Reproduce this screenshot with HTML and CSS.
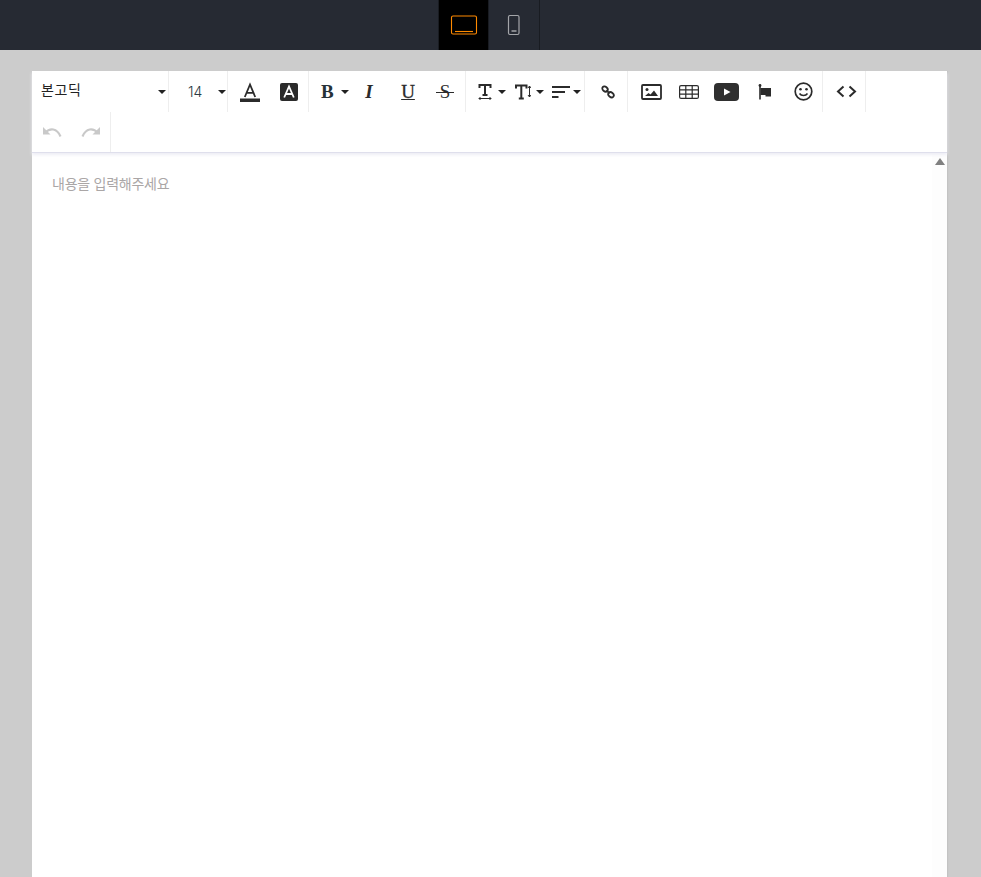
FILE: index.html
```html
<!DOCTYPE html>
<html lang="ko">
<head>
<meta charset="utf-8">
<title>Editor</title>
<link rel="stylesheet" href="styles.css">
</head>
<body>
<header class="topbar">
  <div class="devices">
    <button class="device active" aria-label="desktop">
      <svg width="28" height="20" viewBox="0 0 28 20"><rect x="1.500" y="1" width="25" height="18" rx="1.500" fill="none" stroke="#ff8a00" stroke-width="1.100"/><path d="M5 16.500h18" stroke="#ff8a00" stroke-width="1.100"/></svg>
    </button>
    <button class="device second" aria-label="mobile">
      <svg width="14" height="22" viewBox="0 0 14 22"><rect x="1.500" y="1.500" width="10.500" height="19" rx="1.500" fill="none" stroke="#a3a5a9" stroke-width="1.200"/><path d="M4.500 17h5" stroke="#a3a5a9" stroke-width="1.500"/></svg>
    </button>
  </div>
</header>
<main class="stage">
  <section class="editor">
    <div class="toolbar">
      <div class="group font-group">
        <span class="font-name">본고딕</span><i class="caret"></i>
      </div>
      <div class="group size-group">
        <span class="font-size">14</span><i class="caret"></i>
      </div>
      <div class="group color-group">
        <button class="tool w-c1"><svg width="20" height="20" viewBox="0 0 20 20"><path d="M4.800 15 10 2.500 15.200 15M6.500 10.800h7" fill="none" stroke="#2b2b2b" stroke-width="1.800"/><rect y="16.500" width="20" height="3.500" fill="#2b2b2b"/></svg></button>
        <button class="tool w-c2"><svg width="18" height="18" viewBox="0 0 18 18"><rect width="18" height="18" rx="2" fill="#2b2b2b"/><path d="M4.200 14.500 9 3.500l4.800 11M5.800 11h6.400" fill="none" stroke="#fff" stroke-width="1.800"/></svg></button>
      </div>
      <div class="group style-group">
        <button class="tool serif bold w-b">B<i class="caret"></i></button>
        <button class="tool serif italic w-i">I</button>
        <button class="tool serif under w-u">U</button>
        <button class="tool serif strike w-s"><span class="strike-s">S</span></button>
      </div>
      <div class="group para-group">
        <button class="tool w-t"><svg width="14" height="18" viewBox="0 0 14 18"><path d="M1.500 5V2h11v3M7 2v10M4.500 12h5" fill="none" stroke="#2b2b2b" stroke-width="2"/><path d="M1 15.500h12M2.500 14 1 15.500 2.500 17M11.500 14l1.500 1.500-1.500 1.500" fill="none" stroke="#2b2b2b" stroke-width="1"/></svg><i class="caret"></i></button>
        <button class="tool w-t2"><svg width="16" height="16" viewBox="0 0 16 16"><path d="M1 4.500V1.500h10.500v3M6.300 1.500v13M3.800 14.500h5" fill="none" stroke="#2b2b2b" stroke-width="2"/><path d="M14.500 2v11M13 4l1.500-2L16 4M13 11l1.500 2 1.500-2" fill="none" stroke="#2b2b2b" stroke-width="1"/></svg><i class="caret"></i></button>
        <button class="tool w-a"><svg width="18" height="12" viewBox="0 0 18 12"><path d="M0 1h18M0 6h13M0 11h6.500" stroke="#2b2b2b" stroke-width="2"/></svg><i class="caret"></i></button>
      </div>
      <div class="group link-group">
        <button class="tool w-l"><svg width="14" height="14" viewBox="0 0 14 14"><g fill="none" stroke="#2b2b2b" stroke-width="1.800"><ellipse cx="4" cy="4" rx="3" ry="2.300" transform="rotate(40 4 4)"/><ellipse cx="10" cy="9.800" rx="3" ry="2.300" transform="rotate(40 10 9.800)"/><path d="M5.500 5.300 8.500 8.300"/></g></svg></button>
      </div>
      <div class="group media-group">
        <button class="tool w-m1"><svg width="21" height="16" viewBox="0 0 21 16"><rect x="1" y="1" width="19" height="14" rx="1" fill="none" stroke="#2b2b2b" stroke-width="1.800"/><circle cx="6" cy="5.500" r="1.500" fill="#2b2b2b"/><path d="M4 12l3.500-3 2 1.500L13 6.500l4 5.500z" fill="#2b2b2b"/></svg></button>
        <button class="tool w-m2"><svg width="20" height="14" viewBox="0 0 20 14"><g fill="none" stroke="#2b2b2b" stroke-width="1.200"><rect x=".6" y=".6" width="18.800" height="12.800" rx="1.500"/><path d="M.6 4.900h18.800M.6 9.100h18.800M6.800.6v12.800M13.200.6v12.800"/></g></svg></button>
        <button class="tool w-m3"><svg width="25" height="18" viewBox="0 0 25 18"><rect width="25" height="18" rx="4" fill="#2f2f2f"/><path d="M10 5.500v7l6.500-3.500z" fill="#fff"/></svg></button>
        <button class="tool w-m4"><svg width="13" height="16" viewBox="0 0 13 16"><path d="M2 1.500V15.500" stroke="#2b2b2b" stroke-width="1.600"/><circle cx="2" cy="1.500" r="1.400" fill="#2b2b2b"/><path d="M2.500 4H13v8.500H7.500V11h-5z" fill="#2b2b2b"/></svg></button>
        <button class="tool w-m5"><svg width="19" height="19" viewBox="0 0 19 19"><circle cx="9.500" cy="9.500" r="8.300" fill="none" stroke="#2b2b2b" stroke-width="1.700"/><circle cx="6.500" cy="7.300" r="1.300" fill="#2b2b2b"/><circle cx="12.500" cy="7.300" r="1.300" fill="#2b2b2b"/><path d="M5.500 11.500c1.800 2.800 6.200 2.800 8 0" fill="none" stroke="#2b2b2b" stroke-width="1.500"/></svg></button>
      </div>
      <div class="group code-group">
        <button class="tool w-code"><svg width="21" height="13" viewBox="0 0 21 13"><path d="M7.500 1.500 2 6.500l5.500 5M13.500 1.500 19 6.500l-5.500 5" fill="none" stroke="#2b2b2b" stroke-width="2"/></svg></button>
      </div>
      <div class="row-break"></div>
      <div class="group history-group">
        <button class="tool w-h1"><svg width="20" height="12" viewBox="0 0 20 12"><path d="M1 1v7.500h7.500z" fill="#c9c9c9"/><path d="M3 7C8 1.500 15 2 18.500 10.500" fill="none" stroke="#c9c9c9" stroke-width="2.200"/></svg></button>
        <button class="tool w-h2"><svg width="20" height="12" viewBox="0 0 20 12"><path d="M19 1v7.500h-7.500z" fill="#c9c9c9"/><path d="M17 7C12 1.500 5 2 1.500 10.500" fill="none" stroke="#c9c9c9" stroke-width="2.200"/></svg></button>
      </div>
    </div>
    <div class="content">
      <p class="placeholder">내용을 입력해주세요</p>
      <div class="scrollbar"><i class="scroll-up"></i></div>
    </div>
  </section>
</main>
</body>
</html>
```
FILE: styles.css
```css
* { box-sizing: border-box; }
html, body { margin: 0; height: 100%; overflow: hidden; }
body { background: #cccccc; font-family: "Noto Sans CJK KR", "Open Sans", sans-serif; }
button { border: 0; background: none; padding: 0; margin: 0; font: inherit; }
.topbar { height: 50px; background: #262a33; display: flex; justify-content: center; padding-right: 3px; }
.devices { display: flex; border-left: 1px solid #191c22; }
.device { width: 50px; height: 50px; display: flex; align-items: center; justify-content: center; border-right: 1px solid #191c22; }
.device.second { width: 51px; }
.device.active { background: #000; }
.stage { padding: 21px 34px 0 32px; }
.editor { background: #fff; box-shadow: 1px 0 1px #c3c3c3; height: 806px; display: flex; flex-direction: column; }
.toolbar { display: flex; flex-wrap: wrap; align-content: flex-start; height: 82px; border-bottom: 1px solid #dfdfec; box-shadow: 0 2px 3px #eeeef5; position: relative; z-index: 1; }
.row-break { flex-basis: 100%; height: 0; }
.group { display: flex; align-items: center; height: 41px; border-right: 1px solid #eeeeee; }
.font-group { width: 137px; padding: 0 0 0 9px; }
.font-name { font-size: 14px; line-height: 38px; height: 38px; color: #222; width: 117px; letter-spacing: .6px; margin-top: -5px; }
.size-group { width: 59px; padding-left: 19px; }
.font-size { font-family: "Inter", sans-serif; font-weight: 300; font-size: 14px; color: #2b3a42; width: 30px; }
.color-group { width: 81px; }
.style-group { width: 157px; }
.para-group { width: 119px; padding-left: 12px; }
.link-group { width: 43px; padding-left: 16px; }
.media-group { width: 195px; padding-left: 4px; }
.code-group { width: 43px; }
.history-group { width: 79px; height: 40px; }
.tool { height: 41px; display: flex; align-items: center; justify-content: center; color: #2b2b2b; flex: none; }
.w-c1 { width: 40px; padding-left: 3px; }
.w-c2 { width: 39px; padding-left: 2px; }
.w-h1 { width: 40px; padding-right: 1px; }
.w-h2 { width: 38px; }
.w-l { width: 14px; }
.w-code { width: 42px; padding-left: 4px; }
.w-b { width: 44px; justify-content: flex-start; padding-left: 12px; gap: 7px; }
.w-i { width: 32px; }
.w-u { width: 46px; }
.w-s { width: 28px; }
.w-t { width: 37px; justify-content: flex-start; gap: 6px; }
.w-t2 { width: 37px; justify-content: flex-start; gap: 5px; }
.w-a { width: 33px; justify-content: flex-start; gap: 3px; }
.w-m1 { width: 38px; }
.w-m2 { width: 37px; }
.w-m3 { width: 39px; }
.w-m4 { width: 36px; }
.w-m5 { width: 40px; padding-left: 2px; }
.serif { font-family: "Liberation Serif", serif; font-size: 19px; }
.bold { font-weight: 700; color: #263238; }
.italic { font-style: italic; font-weight: 700; }
.under { text-decoration: underline; font-size: 19px; text-underline-offset: 1px; -webkit-text-stroke: .3px #2b2b2b; }
.strike { font-size: 19px; }
.strike-s { position: relative; font-weight: 400; }
.strike-s::after { content: ""; position: absolute; left: -4px; right: -4px; top: 11px; height: 1px; background: #2b2b2b; }
.caret { display: block; width: 0; height: 0; border: 4px solid transparent; border-top: 4px solid #222; border-bottom: 0; flex: none; }
.content { flex: 1; position: relative; padding: 20px; }
.placeholder { margin: 0; font-size: 14px; letter-spacing: -.25px; color: #aaa6a6; line-height: 20px; }
.scrollbar { position: absolute; top: 0; right: 0; bottom: 0; width: 15px; background: #fdfdfd; }
.scroll-up { position: absolute; top: 5px; left: 3px; width: 0; height: 0; border: 5px solid transparent; border-bottom: 7px solid #808080; border-top: 0; }
```
